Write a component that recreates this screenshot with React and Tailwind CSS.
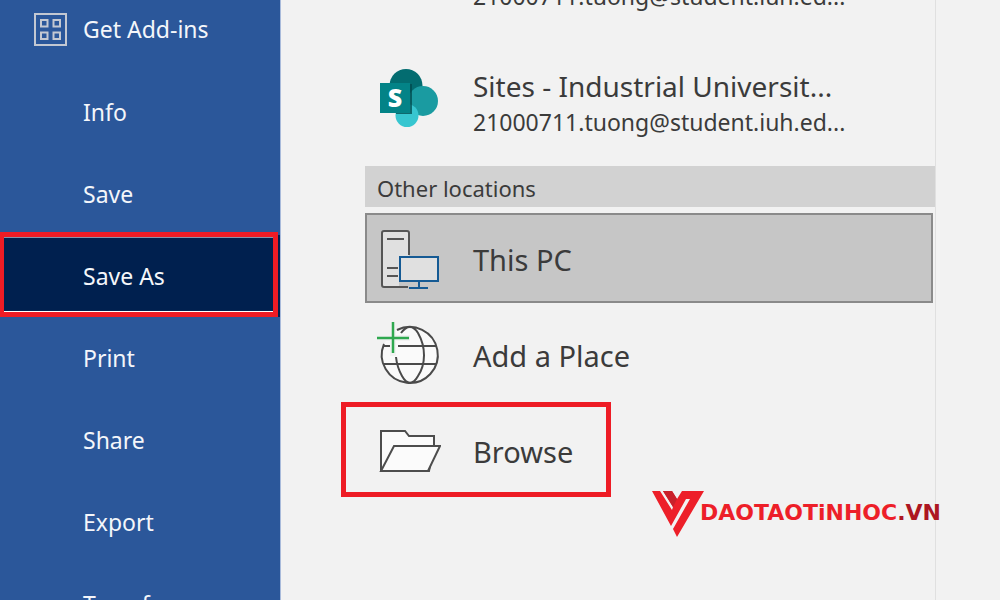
const navItems = ["Info", "Save", "Save As", "Print", "Share", "Export", "Transform"];

function AddInsIcon() {
  return (
    <svg viewBox="0 0 34 34" className="size-[34px] shrink-0" fill="none" stroke="#c3c8d2" strokeWidth="2" aria-hidden="true">
      <rect x="2" y="1" width="31" height="31" />
      <rect x="8" y="7" width="6.500" height="6.500" />
      <rect x="20.500" y="7" width="6.500" height="6.500" />
      <rect x="8" y="19.500" width="6.500" height="6.500" />
      <rect x="20.500" y="19.500" width="6.500" height="6.500" />
    </svg>
  );
}

function SharePointIcon() {
  return (
    <svg viewBox="0 0 64 64" className="size-16 shrink-0" aria-hidden="true">
      <circle cx="29" cy="19.500" r="16.500" fill="#036c70" />
      <circle cx="46" cy="35" r="15" fill="#1a9ba1" />
      <circle cx="30" cy="49.500" r="11.500" fill="#37c6d0" />
      <path d="M33 18h2v30H19v-2h14z" fill="#024a4d" opacity=".75" />
      <rect x="3" y="17" width="30" height="30" fill="#038387" />
      <text x="18" y="41" textAnchor="middle" fontSize="25" fontWeight="800" fill="#fff" className="font-['Open_Sans',sans-serif]">S</text>
    </svg>
  );
}

function PcIcon() {
  return (
    <svg viewBox="0 0 64 64" className="size-16 shrink-0" fill="none" aria-hidden="true">
      <path d="M5 61V7q0-2 2-2h23q2 0 2 2v24H22v30z" fill="#e0e0e0" />
      <path d="M32 29V7q0-2-2-2H7q-2 0-2 2v52q0 2 2 2h24M10 13h17M10 42h11M10 50h11" stroke="#555" strokeWidth="2" />
      <rect x="23" y="31" width="38" height="24" fill="#e0e0e0" stroke="#155a94" strokeWidth="2" />
      <path d="M42 55v8M32 62h19" stroke="#155a94" strokeWidth="2" />
    </svg>
  );
}

function GlobeIcon() {
  return (
    <svg viewBox="0 0 64 64" className="size-16 shrink-0" fill="none" aria-hidden="true">
      <circle cx="33" cy="33" r="28" fill="#fafafa" />
      <path d="M20 8A28 28 0 1 1 7 22M24 11C30 3 36 3 41 11C49 25 49 42 41 54C36 63 30 63 25 54Q20 45 19 35M21 24h38M7 24h6M7 42h52" stroke="#4a4a4a" strokeWidth="2" />
      <path d="M16 0v34M0 16h33" stroke="#f2f2f2" strokeWidth="6" />
      <path d="M16 0v31M0 16h32" stroke="#2fa84f" strokeWidth="2.500" />
    </svg>
  );
}

function FolderIcon() {
  return (
    <svg viewBox="0 0 64 64" className="size-16 shrink-0" fill="#fbfbfb" stroke="#4d4d4d" strokeWidth="2" aria-hidden="true">
      <path d="M4 53V13h24l4 5h25v11L52 53z" />
      <path d="M4 53l13-25h46L51 53z" />
    </svg>
  );
}

function Watermark() {
  return (
    <div className="absolute top-[490px] right-[59px] flex items-start">
      <svg viewBox="0 0 52 47" className="h-[47px] w-[52px]" aria-hidden="true">
        <path d="M0 1h8l12 19 1-3L11 1h9l5 8 5-8h22L25 47l-4-8L38 9h-4L19 36z" fill="#ed1f29" />
        <path d="M11 1h9l5 8-4 8z" fill="#c9202a" />
      </svg>
      <span className="-ml-1 mt-[11px] font-['DejaVu_Sans',sans-serif] text-[22px] leading-6 font-bold text-[#ed1f29]">
        DAOTAOTiNHOC<span className="text-[#ad1622]">.VN</span>
      </span>
    </div>
  );
}

function Place({ icon, label, selected, marked }) {
  return (
    <button
      type="button"
      className={`relative flex h-[90px] items-center gap-[32px] border-2 pl-[10px] text-left text-[29px] ${
        selected ? "border-[#8a8a8a] bg-[#c6c6c6]" : "border-transparent"
      }`}
    >
      {icon}
      <span className="pt-[3px]">{label}</span>
      {marked && <span className="absolute -top-[5px] -left-[26px] h-[95px] w-[270px] border-5 border-[#ee1c25]" />}
    </button>
  );
}

export default function App() {
  return (
    <div className="relative flex h-screen overflow-hidden bg-[#f2f2f2] font-['Noto_Sans',sans-serif] text-[#3b3b3b]">
      <nav className="w-[281px] shrink-0 border-r border-[#a9bbdb] bg-[#2b579a] text-[23px] text-[#f4f6fa]">
        <button type="button" className="flex h-[71px] w-full items-center gap-4 pb-[12px] pl-[33px] text-left">
          <AddInsIcon />
          Get Add-ins
        </button>
        {navItems.map((item) =>
          item === "Save As" ? (
            <button key={item} type="button" aria-current="page" className="relative flex h-[82px] w-full items-center bg-[#00204f] pl-[83px] text-left">
              {item}
              <span className="absolute -top-[3px] left-0 h-[85px] w-[278px] border-5 border-l-4 border-[#ee1c25]">
                <span className="block h-full border-y border-t-[#8793aa] border-b-white" />
              </span>
            </button>
          ) : (
            <button key={item} type="button" className="flex h-[82px] w-full items-center pl-[83px] text-left">
              {item}
            </button>
          ),
        )}
      </nav>
      <main className="mr-16 min-w-0 flex-1 border-r border-[#e0e0e0] pl-[84px]">
        <div className="flex h-[12px] items-end overflow-hidden pl-[108px] text-[23px] leading-8">21000711.tuong@student.iuh.ed...</div>
        <button type="button" className="flex h-[154px] w-full items-center gap-[32px] pt-[18px] pl-[12px] text-left">
          <SharePointIcon />
          <span className="pt-[7px]">
            <span className="block text-[28px] leading-10">Sites - Industrial Universit...</span>
            <span className="block text-[23px] leading-8">21000711.tuong@student.iuh.ed...</span>
          </span>
        </button>
        <h2 className="flex h-[41px] items-center bg-[#d2d2d2] pt-1 pl-[12px] text-[22px]">Other locations</h2>
        <div className="mt-[6px] mr-[2px] flex flex-col gap-[6px]">
          <Place icon={<PcIcon />} label="This PC" selected />
          <Place icon={<GlobeIcon />} label="Add a Place" />
          <Place icon={<FolderIcon />} label="Browse" marked />
        </div>
      </main>
      <Watermark />
    </div>
  );
}
